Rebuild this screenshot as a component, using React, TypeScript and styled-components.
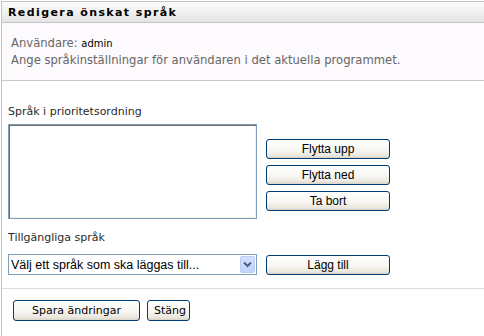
import React from 'react';
import styled, { createGlobalStyle } from 'styled-components';

const GlobalStyle = createGlobalStyle`
  html, body {
    margin: 0;
    padding: 0;
    background: #ffffff;
  }
`;

const Panel = styled.div`
  margin: 1px 0 0 1px;
  min-height: 335px;
  box-sizing: border-box;
  border-left: 1px solid #c4c4c4;
  border-top: 1px solid #c4c4c4;
  font-family: "DejaVu Sans", Verdana, sans-serif;
`;

const Header = styled.div`
  height: 20px;
  padding-left: 6px;
  display: flex;
  align-items: center;
  background: linear-gradient(180deg, #fbfbfb 0%, #f1f1f1 50%, #e4e4e4 100%);
  border-bottom: 1px solid #c4c4c4;
`;

const Title = styled.h1`
  margin: 0;
  font-size: 11px;
  font-weight: bold;
  letter-spacing: 1.4px;
  color: #000000;
`;

const Info = styled.div`
  background: #fdfafd;
  border-bottom: 1px solid #c8c8c8;
  padding: 12px 0 11px 9px;
  font-size: 11.6px;
  line-height: 17px;
  color: #666666;
`;

const UserName = styled.span`
  color: #000000;
  font-size: 10px;
`;

const Body = styled.div`
  padding: 24px 0 0 6px;
`;

const Label = styled.div<{ $gap: number }>`
  font-size: 11px;
  line-height: 14px;
  color: #2a2a2a;
  margin-bottom: ${(p) => p.$gap}px;
`;

const Row = styled.div<{ $align: string }>`
  display: flex;
  align-items: ${(p) => p.$align};
  gap: 9px;
`;

const ListBox = styled.div`
  width: 249px;
  height: 95px;
  box-sizing: border-box;
  border: 1px solid #7f9db9;
  box-shadow: inset 1px 1px 0 #716f64, inset -1px -1px 0 #f1efe2;
  background: #ffffff;
`;

const ButtonColumn = styled.div`
  display: flex;
  flex-direction: column;
  gap: 6px;
  padding-top: 15px;
`;

const Button = styled.button<{ $width?: number; $pixel?: boolean }>`
  width: ${(p) => (p.$width ? `${p.$width}px` : 'auto')};
  height: ${(p) => (p.$pixel ? 21 : 20)}px;
  box-sizing: border-box;
  padding: 0 6px;
  border: 1px solid #003c74;
  border-radius: 3px;
  background: linear-gradient(180deg, #ffffff 0%, #f7f6f2 55%, #ebe8df 85%, #d8d3c6 100%);
  font-family: ${(p) => (p.$pixel ? '"DejaVu Sans", Verdana, sans-serif' : '"Liberation Sans", Arial, sans-serif')};
  font-size: ${(p) => (p.$pixel ? '11px' : '12px')};
  color: #000000;
  cursor: pointer;
`;

const Spacer = styled.div<{ $h: number }>`
  height: ${(p) => p.$h}px;
`;

const SelectBox = styled.div`
  width: 249px;
  height: 21px;
  box-sizing: border-box;
  border: 1px solid #7f9db9;
  background: #ffffff;
  display: flex;
  align-items: center;
  padding: 1px;
`;

const SelectText = styled.span`
  flex: 1;
  padding-left: 1px;
  font-family: "Liberation Sans", Arial, sans-serif;
  font-size: 12.5px;
  color: #000000;
  white-space: nowrap;
`;

const ArrowBox = styled.span`
  width: 15px;
  height: 17px;
  box-sizing: border-box;
  border: 1px solid #b9cdf7;
  border-radius: 2px;
  background: linear-gradient(180deg, #d4e1fd 0%, #c1d3fb 100%);
  display: flex;
  align-items: center;
  justify-content: center;
`;

const Divider = styled.hr`
  margin: 13px 0 0 0;
  border: none;
  border-top: 1px solid #dcdcdc;
`;

const Footer = styled.div`
  display: flex;
  gap: 7px;
  padding: 11px 0 0 11px;
`;

const App = () => {
  return (
    <>
      <GlobalStyle />
      <Panel>
        <Header>
          <Title>Redigera önskat språk</Title>
        </Header>
        <Info>
          <div>
            Användare: <UserName>admin</UserName>
          </div>
          <div>Ange språkinställningar för användaren i det aktuella programmet.</div>
        </Info>
        <Body>
          <Label $gap={5}>Språk i prioritetsordning</Label>
          <Row $align="flex-start">
            <ListBox />
            <ButtonColumn>
              <Button $width={124}>Flytta upp</Button>
              <Button $width={124}>Flytta ned</Button>
              <Button $width={124}>Ta bort</Button>
            </ButtonColumn>
          </Row>
          <Spacer $h={12} />
          <Label $gap={9}>Tillgängliga språk</Label>
          <Row $align="center">
            <SelectBox>
              <SelectText>Välj ett språk som ska läggas till...</SelectText>
              <ArrowBox>
                <svg width="9" height="7" viewBox="0 0 9 7">
                  <path d="M1 1.5 L4.5 5 L8 1.5" fill="none" stroke="#4d6185" strokeWidth="2" />
                </svg>
              </ArrowBox>
            </SelectBox>
            <Button $width={124}>Lägg till</Button>
          </Row>
        </Body>
        <Divider />
        <Footer>
          <Button $pixel $width={127}>Spara ändringar</Button>
          <Button $pixel $width={43}>Stäng</Button>
        </Footer>
      </Panel>
    </>
  );
};

export default App;
